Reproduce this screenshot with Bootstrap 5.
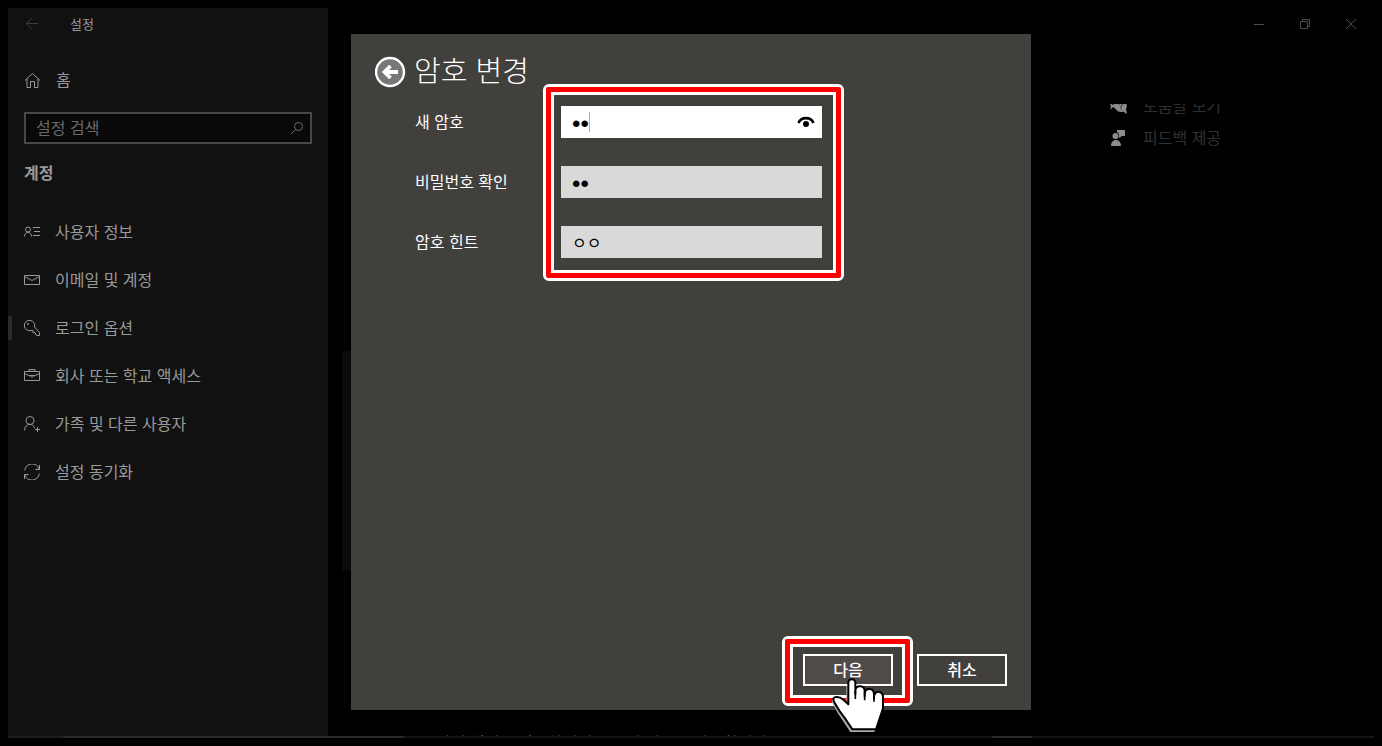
<!DOCTYPE html>
<html lang="ko" data-bs-theme="dark">
<head>
<meta charset="utf-8">
<meta name="viewport" content="width=device-width, initial-scale=1">
<title>설정</title>
<link href="https://cdn.jsdelivr.net/npm/bootstrap@5.3.0/dist/css/bootstrap.min.css" rel="stylesheet">
<style>
  body { background: #000; color: #9a9a9a; font-family: "Noto Sans CJK KR", sans-serif; font-size: 16px; line-height: 24px; }
  svg { display: block; flex: none; fill: none; stroke: currentColor; }
  button { background: none; border: 0; padding: 0; color: inherit; }

  .win { padding: 8px; }
  .side { width: 320px; background: #111; }
  .side-title { height: 32px; padding: 0 16px; gap: 30px; font-size: 13px; }
  .side-title button { color: #3c3c3c; }
  .home-link { height: 32px; margin: 24px 16px 16px; gap: 15px; color: #9a9a9a; }
  .search-box { height: 32px; margin: 0 16px; padding: 0 6px 0 10px; border: 2px solid #484848; background: #090909; color: #6a6a6a; }
  .search-box input { background: none; border: 0; outline: 0; padding: 0 0 3px; color: inherit; line-height: 24px; min-width: 0; }
  .search-box input::placeholder { color: #6a6a6a; opacity: 1; }
  .side-head { font-size: 16px; line-height: 24px; margin: 16px 16px 24px; color: #9a9a9a; }
  .side-nav a { height: 48px; padding-left: 16px; gap: 15px; color: #9a9a9a; text-decoration: none; }
  .side-nav a.active { background: linear-gradient(#2a2a2a, #2a2a2a) 0 50% / 4px 24px no-repeat; }
  .side a span, .aside-links span, .label-col label { padding-bottom: 2px; }

  .caption { height: 32px; padding-right: 17px; gap: 34px; color: #4d4d4d; }
  .scroller { margin-top: 64px; }
  .aside-links { width: 264px; margin-top: -14px; }
  .aside-links a { height: 32px; gap: 16px; color: #303030; text-decoration: none; }
  .aside-links svg { color: #8c8c8c; }
  .under-panel { margin: 247px 14px 0; height: 220px; width: 600px; background: #0a0a0a; }
  .tail { height: 3px; margin: 162px 0 0 108px; line-height: 18px; color: #777; }
  .edge { height: 2px; background: linear-gradient(90deg, #1c1c1c 4%, #2b2b2b 4% 29%, #141414 29% 72%, #2b2b2b 72% 75%, #141414 75%); }

  .overlay { inset: 0; padding: 34px 16px 36px; }
  .dialog { width: 680px; background: #42403d; color: #fff; padding: 20px 24px 24px; }
  .dialog h1 { font-size: 29px; line-height: 30px; font-weight: 300; }
  .dialog-head { gap: 7px; height: 34px; }
  .field-grid { grid-template-columns: 128px 301px; padding-left: 40px; margin-top: -4px; }
  .label-col { padding-top: 22px; }
  .label-col, .input-col { display: grid; grid-template-columns: minmax(0, 1fr); grid-auto-rows: 32px; gap: 28px; align-items: center; }
  .hot { border: 3px solid #fff; border-radius: 6px; background: #fff; }
  .hot-red { border: 5px solid #f00; border-radius: 2px; padding: 3px; background: #fff; }
  .hot-in { background: #42403d; }
  .input-col { padding: 11px 11px 12px 7px; }
  .entry { background: #d9d9d9; color: #000; height: 32px; padding: 0 7px 0 11px; }
  .entry.on { background: #fff; }
  .entry input { background: none; border: 0; outline: 0; padding: 0; color: #000; min-width: 0; height: 24px; }
  .entry input[type=password] { font-family: "Liberation Sans", sans-serif; font-size: 24px; padding-top: 3px; }
  .entry.on input { background: linear-gradient(#9bb0b8, #9bb0b8) 17px 50% / 1px 20px no-repeat; }
  .act { width: 90px; height: 32px; border: 2px solid #fff; font-size: 16px; font-weight: 500; line-height: 24px; padding-bottom: 2px; color: #fff; }
  .act.next { background: #504a48; }
  .acts { gap: 4px; margin-bottom: -20px; }
  .acts > .act { margin-bottom: 2px; }
  .pad-next { padding: 7px 9px 9px 10px; }
  .hand { position: absolute; left: 40px; top: 26px; stroke: none; }
</style>
</head>
<body>
<div class="win vh-100 d-flex flex-column">
  <div class="d-flex flex-grow-1 overflow-hidden">
    <aside class="side flex-shrink-0">
      <div class="side-title d-flex align-items-center">
        <button type="button" aria-label="뒤로"><svg width="16" height="16" viewBox="0 0 16 16"><path d="M14 7.500H2.500M8 2L2.500 7.500L8 13"/></svg></button>
        <span>설정</span>
      </div>
      <a class="home-link d-flex align-items-center text-decoration-none" href="#">
        <svg width="17" height="17" viewBox="0 0 17 17"><path d="M1 8.500L8.500 1.500L16 8.500M3 7V15.500H6.500V9.500H10.500V15.500H14V7"/></svg>
        <span>홈</span>
      </a>
      <div class="search-box d-flex align-items-center">
        <input class="flex-grow-1" type="text" placeholder="설정 검색" aria-label="설정 검색">
        <svg width="14" height="14" viewBox="0 0 14 14"><circle cx="8.500" cy="5.500" r="4"/><path d="M5.500 8.500L1 13"/></svg>
      </div>
      <h2 class="side-head fw-bold">계정</h2>
      <nav class="side-nav">
        <a class="d-flex align-items-center" href="#"><svg width="16" height="16" viewBox="0 0 16 16"><circle cx="4" cy="5.500" r="2.500"/><path d="M.5 12.500C.5 7 7.500 7 7.500 12.500M9 3.500H16M10 7.500H16M9 11.500H16"/></svg><span>사용자 정보</span></a>
        <a class="d-flex align-items-center" href="#"><svg width="16" height="16" viewBox="0 0 16 16"><path d="M.5 3.500H15.500V12.500H.5ZM.5 4.500L8 8.500L15.500 4.500"/></svg><span>이메일 및 계정</span></a>
        <a class="d-flex align-items-center active" href="#"><svg width="16" height="16" viewBox="0 0 16 16"><path d="M10.500 7A5.200 5.200 0 1 0 7 10.500L9 10.500V12.500H11L12.500 15.500H15.500V12.500Z"/><circle cx="4" cy="4" r=".6"/></svg><span>로그인 옵션</span></a>
        <a class="d-flex align-items-center" href="#"><svg width="16" height="16" viewBox="0 0 16 16"><path d="M.5 3.500H15.500V12.500H.5ZM5 3.500V1.500H11V3.500M.5 5.500L6 8M10 8L15.500 5.500M6 7.500H10L8 9.500Z"/></svg><span>회사 또는 학교 액세스</span></a>
        <a class="d-flex align-items-center" href="#"><svg width="16" height="16" viewBox="0 0 16 16"><circle cx="6" cy="4.500" r="4"/><path d="M.5 14.500C1 6.500 9.500 7 10.500 12M13.500 11V16M11 13.500H16"/></svg><span>가족 및 다른 사용자</span></a>
        <a class="d-flex align-items-center" href="#"><svg width="16" height="16" viewBox="0 0 16 16"><path d="M.8 6.500A7.300 7.300 0 0 1 15 5M15.500 1V5.500H11.500M15.200 9.500A7.300 7.300 0 0 1 1 11M.5 15V10.500H4.500"/></svg><span>설정 동기화</span></a>
      </nav>
    </aside>
    <main class="flex-grow-1 d-flex flex-column overflow-hidden">
      <div class="caption d-flex justify-content-end align-items-center">
        <button type="button" aria-label="최소화"><svg width="12" height="12" viewBox="0 0 12 12"><path d="M1 6.500H11"/></svg></button>
        <button type="button" aria-label="이전 크기로 복원"><svg width="12" height="12" viewBox="0 0 12 12"><path d="M1.500 3.500H8.500V10.500H1.500ZM3.500 3.500V1.500H10.500V8.500H8.500"/></svg></button>
        <button type="button" aria-label="닫기"><svg width="12" height="12" viewBox="0 0 12 12"><path d="M1 1L11 11M11 1L1 11"/></svg></button>
      </div>
      <div class="scroller flex-grow-1 d-flex overflow-hidden">
        <div class="flex-grow-1">
          <div class="under-panel"></div>
          <div class="tail overflow-hidden">장치 설정을 완료하려면 로그인 정보를 사용합니다</div>
        </div>
        <nav class="aside-links flex-shrink-0">
          <a class="d-flex align-items-center" href="#"><svg width="17" height="16" viewBox="0 0 17 16"><g fill="currentColor" stroke="none"><path d="M0 5L3 7L6 4V11L3 9L0 12L1 9Z"/><path d="M11 2A6 6 0 0 1 16 11L17 16L13 13.500A6 6 0 1 1 11 2Z"/></g><path stroke="#222" d="M9 6.500C9.500 4.500 13 5 12 7.500L11 8.500V10M11 11V12"/></svg><span>도움말 보기</span></a>
          <a class="d-flex align-items-center" href="#"><svg width="17" height="16" viewBox="0 0 17 16"><g fill="currentColor" stroke="none"><circle cx="5.500" cy="6" r="3"/><path d="M1 16C1 8 11 8 11 16ZM7 0H15V6H12L9 8V4L7 2Z"/></g></svg><span>피드백 제공</span></a>
        </nav>
      </div>
    </main>
  </div>
  <div class="edge flex-shrink-0"></div>
</div>

<div class="overlay position-fixed d-flex justify-content-center">
  <form class="dialog d-flex flex-column" role="dialog" aria-labelledby="dlg-title">
    <div class="dialog-head d-flex align-items-start">
      <button type="button" aria-label="뒤로"><svg width="32" height="34" viewBox="0 0 32 34"><circle cx="15" cy="18" r="14" fill="#777" stroke-width="2.400"/><path d="M23 18H10M15.500 12L9.500 18L15.500 24" stroke-width="3.800"/></svg></button>
      <h1 id="dlg-title" class="m-0">암호 변경</h1>
    </div>
    <div class="field-grid d-grid">
      <div class="label-col">
        <label for="pw1">새 암호</label>
        <label for="pw2">비밀번호 확인</label>
        <label for="hint">암호 힌트</label>
      </div>
      <div class="hot"><div class="hot-red"><div class="hot-in input-col">
        <div class="entry on d-flex align-items-center"><input id="pw1" class="flex-grow-1" type="password" value="12"><svg width="18" height="16" viewBox="0 0 18 16"><path d="M1.500 9C4 2.500 14 2.500 16.500 9" stroke-width="2.600"/><circle cx="9" cy="10" r="3" fill="currentColor" stroke="none"/></svg></div>
        <div class="entry d-flex align-items-center"><input id="pw2" class="flex-grow-1" type="password" value="12"></div>
        <div class="entry d-flex align-items-center"><input id="hint" class="flex-grow-1" type="text" value="ㅇㅇ"></div>
      </div></div></div>
    </div>
    <div class="acts d-flex justify-content-end align-items-center mt-auto">
      <div class="hot position-relative"><div class="hot-red"><div class="hot-in pad-next">
        <button class="act next d-block" type="submit">다음</button></div></div>
        <svg class="hand" width="70" height="75" viewBox="0 0 210 225"><path fill="#aaa" d="M64 116V62H70V110L30 98Q18 102 21 112L38 144L54 168L76 201H148L152 190L60 150L40 100Z"/><path fill="#fff" stroke="#000" stroke-width="6" stroke-linejoin="round" d="M70 118V54Q70 43 80 43Q91 43 91 54V88V76Q93 63 106 64Q119 65 119 78V94V84Q122 71 134 72Q147 73 147 88V100V92Q152 78 163 81Q175 84 174 98V130L160 172L153 193H82L60 160L45 140L27 110Q21 98 33 96Q45 95 55 104Z"/><path stroke="#000" stroke-width="5" d="M91 76V102M119 80V106M147 88V110"/></svg>
      </div>
      <button class="act" type="button">취소</button>
    </div>
  </form>
</div>
<script src="https://cdn.jsdelivr.net/npm/bootstrap@5.3.0/dist/js/bootstrap.bundle.min.js"></script>
</body>
</html>
